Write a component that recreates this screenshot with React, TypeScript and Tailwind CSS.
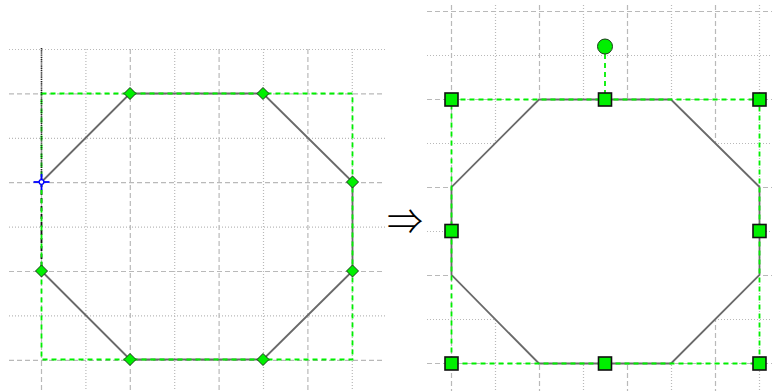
const GRID = "#b9b9b9"
const GREEN = "#00f000"

type Pt = [number, number]

function Grid({
  xs,
  ys,
  x0,
  x1,
  y0,
  y1,
  dashX,
  dashY,
}: {
  xs: number[]
  ys: number[]
  x0: number
  x1: number
  y0: number
  y1: number
  dashX: (i: number) => boolean
  dashY: (i: number) => boolean
}) {
  return (
    <g strokeWidth={1.2}>
      {ys.map((y, i) => (
        <line
          key={"h" + i}
          x1={x0}
          x2={x1}
          y1={y}
          y2={y}
          stroke={GRID}
          strokeDasharray={dashY(i) ? "5 3" : "1 2"}
        />
      ))}
      {xs.map((x, i) => (
        <line
          key={"v" + i}
          x1={x}
          x2={x}
          y1={y0}
          y2={y1}
          stroke={GRID}
          strokeDasharray={dashX(i) ? "5 3" : "1 2"}
        />
      ))}
    </g>
  )
}

function Diamond({ p }: { p: Pt }) {
  const [x, y] = p
  return (
    <polygon
      points={`${x},${y - 6} ${x + 6},${y} ${x},${y + 6} ${x - 6},${y}`}
      fill="#00f000"
      stroke="#1a3a1a"
      strokeWidth={1}
    />
  )
}

function Square({ p }: { p: Pt }) {
  const [x, y] = p
  return <rect x={x - 6.5} y={y - 6.5} width={13} height={13} fill="#00f000" stroke="#111" strokeWidth={1.6} />
}

function LeftShape() {
  const xs = Array.from({ length: 8 }, (_, i) => 41.5 + 44.4 * i)
  const ys = Array.from({ length: 8 }, (_, j) => 49.5 + 44.4 * j)
  const L = 41.5, R = 352.5, T = 93.5, B = 359.5
  const oct: Pt[] = [
    [130, T], [263, T], [R, 182], [R, 271], [263, B], [130, B], [L, 271],
  ]
  return (
    <svg width={386} height={391} className="block shrink-0">
      <Grid xs={xs} ys={ys} x0={9} x1={385} y0={49} y1={391} dashX={(i) => i % 2 === 0} dashY={(i) => i % 2 === 1} />
      <polyline points={[[L, 182], ...oct].map((p) => p.join(",")).join(" ")} fill="none" stroke="#6a6a6a" strokeWidth={1.8} />
      <line x1={L} x2={L} y1={182} y2={271} stroke="#111" strokeWidth={1.8} strokeDasharray="5 3" />
      <rect x={L} y={T} width={R - L} height={B - T} fill="none" stroke={GREEN} strokeWidth={1.8} strokeDasharray="5 4" />
      <line x1={L} x2={L} y1={48} y2={182} stroke="#222" strokeWidth={1.6} strokeDasharray="1.2 1" />
      {oct.map((p, i) => (
        <Diamond key={i} p={p} />
      ))}
      <g stroke="#0000ff" strokeWidth={1.8}>
        <line x1={L - 8} x2={L + 8} y1={182} y2={182} />
        <line x1={L} x2={L} y1={174} y2={190} />
        <circle cx={L} cy={182} r={2.4} fill="#fff" strokeWidth={1.3} />
      </g>
    </svg>
  )
}

function RightShape() {
  const xs = Array.from({ length: 8 }, (_, i) => 451.5 + 44 * i)
  const ys = Array.from({ length: 9 }, (_, j) => 11.5 + 44 * j)
  const L = 451.5, R = 759.5, T = 99.5, B = 363.5
  const oct: Pt[] = [
    [539, T], [671, T], [R, 187], [R, 275], [671, B], [539, B], [L, 275], [L, 187],
  ]
  const handles: Pt[] = [
    [L, T], [605, T], [R, T], [L, 231], [R, 231], [L, B], [605, B], [R, B],
  ]
  return (
    <svg width={348} height={391} viewBox="424 0 348 391" className="block shrink-0">
      <Grid xs={xs} ys={ys} x0={427} x1={772} y0={5} y1={391} dashX={(i) => i % 2 === 0} dashY={(i) => i % 2 === 0} />
      <polygon points={oct.map((p) => p.join(",")).join(" ")} fill="#fff" stroke="#6a6a6a" strokeWidth={1.8} />
      <rect x={L} y={T} width={R - L} height={B - T} fill="none" stroke={GREEN} strokeWidth={1.8} strokeDasharray="5 4" />
      <line x1={605} x2={605} y1={54} y2={T} stroke={GREEN} strokeWidth={1.8} strokeDasharray="5 4" />
      <circle cx={605} cy={46.5} r={7.5} fill="#00f000" stroke="#1a3a1a" strokeWidth={1} />
      {handles.map((p, i) => (
        <Square key={i} p={p} />
      ))}
    </svg>
  )
}

export default function App() {
  return (
    <div className="flex w-[772px] h-[391px] bg-white overflow-hidden">
      <LeftShape />
      <div className="w-[38px] h-[391px] shrink-0 flex items-center justify-center pt-[46px]">
        <span className="text-[36px] leading-none text-black font-light font-['Noto_Sans_CJK_JP',sans-serif]">⇒</span>
      </div>
      <RightShape />
    </div>
  )
}
